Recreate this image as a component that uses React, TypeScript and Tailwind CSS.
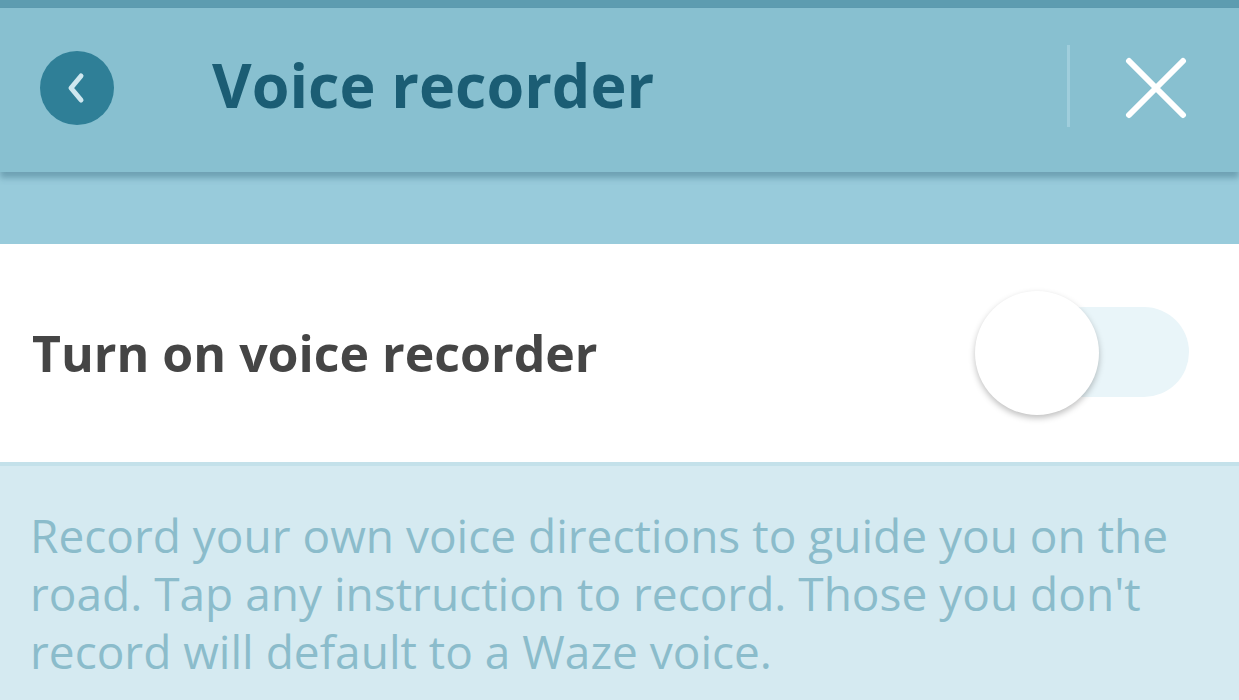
export default function App() {
  return (
    <div className="w-[1239px] h-[700px] overflow-hidden flex flex-col bg-[#d5eaf1] font-['Open_Sans',sans-serif]">
      {/* Header */}
      <div className="h-[8px] bg-[#5d9cb0]" />
      <div className="h-[164px] bg-[#88c0d0] flex items-center pl-[40px] pr-[52px] shadow-[0_6px_6px_rgba(60,110,130,0.45)] relative z-10">
        <div className="w-[74px] h-[74px] rounded-full bg-[#2f7f97] flex items-center justify-center -mt-[4px]">
          <svg width="30" height="36" viewBox="0 0 30 36" fill="none">
            <path d="M19 6 L9 18 L19 30" stroke="#cfe7ef" strokeWidth="5" strokeLinecap="round" strokeLinejoin="round" />
          </svg>
        </div>
        <h1 className="ml-[98px] -mt-[12px] text-[61px] font-bold text-[#1b5d74] leading-none">Voice recorder</h1>
        <div className="ml-auto w-[3px] h-[82px] bg-[#a0cedc] -mt-[8px]" />
        <svg className="ml-[55px] -mt-[4px]" width="62" height="62" viewBox="0 0 62 62" fill="none">
          <path d="M4 4 L58 58 M58 4 L4 58" stroke="white" strokeWidth="6" strokeLinecap="round" />
        </svg>
      </div>
      <div className="h-[72px] bg-[#98cbdb]" />
      {/* Toggle row */}
      <div className="h-[222px] bg-white flex items-center justify-between pl-[32px] pr-[50px] border-b-[4px] border-[#c4e1ea]">
        <span className="text-[50px] font-bold text-[#454545]">Turn on voice recorder</span>
        <div className="relative w-[214px] h-[124px]">
          <div className="absolute right-0 top-[16px] w-[150px] h-[90px] rounded-full bg-[#e9f5f9]" />
          <div className="absolute left-0 top-0 w-[124px] h-[124px] rounded-full bg-white shadow-[0_3px_6px_rgba(0,0,0,0.25)]" />
        </div>
      </div>
      {/* Description */}
      <p className="px-[30px] pt-[40px] text-[46px] leading-[58px] text-[#8bbccb] whitespace-nowrap">
        Record your own voice directions to guide you on the
        <br />
        road. Tap any instruction to record. Those you don't
        <br />
        record will default to a Waze voice.
      </p>
    </div>
  );
}
